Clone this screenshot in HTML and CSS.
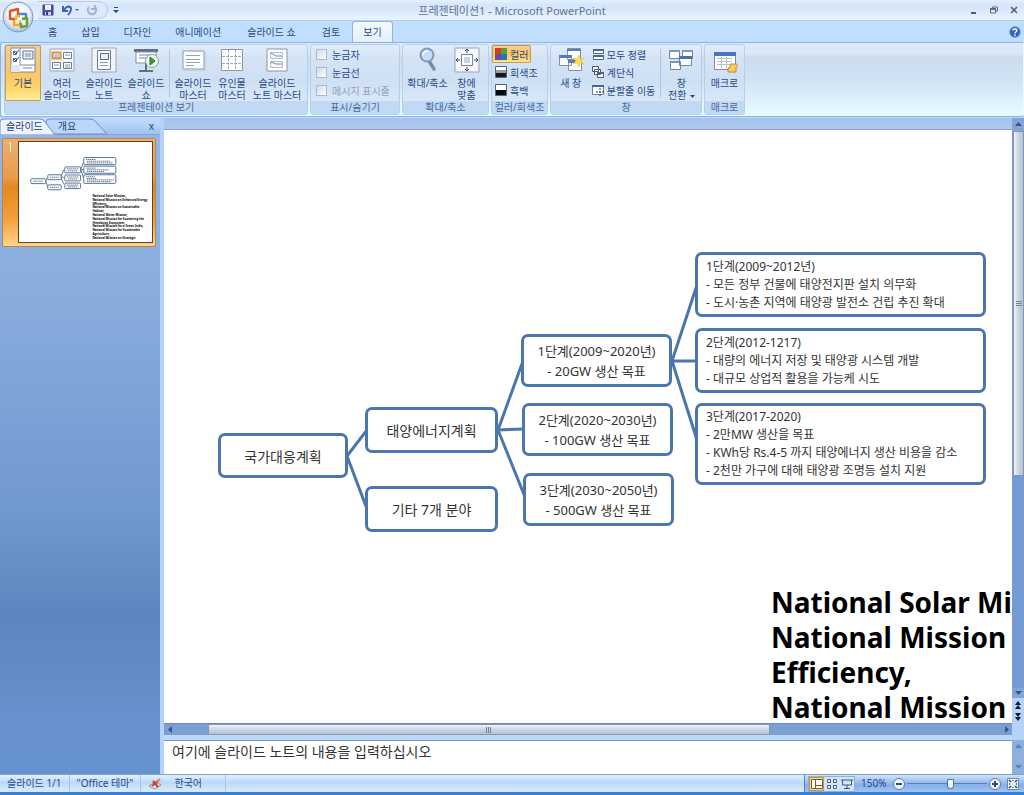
FILE: index.html
```html
<!DOCTYPE html>
<html lang="ko">
<head>
<meta charset="utf-8">
<title>프레젠테이션1 - Microsoft PowerPoint</title>
<link rel="stylesheet" href="styles.css">
</head>
<body>
<div class="app">
  <header class="titlebar">
    <button class="office" aria-label="Office 단추">
      <svg width="32" height="32" viewBox="0 0 32 32">
        <defs>
          <radialGradient id="orb" cx=".5" cy=".4" r=".6"><stop offset="0" stop-color="#fff"/><stop offset=".6" stop-color="#eef2fa"/><stop offset="1" stop-color="#a9bad8"/></radialGradient>
        </defs>
        <circle cx="16" cy="16" r="15" fill="url(#orb)" stroke="#8298bd"/>
        <g fill="none" stroke-width="2.4" stroke-linejoin="round">
          <path d="M13 18H8v-8l8-2v6" stroke="#e2561c"/>
          <path d="M17 13h7v5" stroke="#4b88d9"/>
          <path d="M12 19v5h6v-5" stroke="#f4a91d"/>
          <path d="M20 18l5-1v8l-6 1v-4" stroke="#5da53a"/>
        </g>
        <path d="M13 14h5v5h-5z" fill="#f7b548"/>
        <path d="M15.500 16.500h3v3h-3z" fill="#fff"/>
      </svg>
    </button>
    <div class="quick">
      <button aria-label="저장"><svg width="12" height="12" viewBox="0 0 12 12"><path d="M1 1h10v10H1z" fill="#4c50a4" stroke="#393c88"/><path d="M3 1h6v5H3z" fill="#eef2fc"/><path d="M3 8h6v3H3z" fill="#c7cfea"/><path d="M4 8h2v3H4z" fill="#393c88"/></svg></button>
      <button aria-label="실행 취소"><svg width="18" height="12" viewBox="0 0 18 12"><path d="M2 2v5h5M3 6c3-5 7-4 7-1 0 2-1 4-3 6" fill="none" stroke="#3c62bb" stroke-width="2"/><path d="M14 5h4l-2 2z" fill="#43649c"/></svg></button>
      <button aria-label="다시 실행"><svg width="12" height="12" viewBox="0 0 12 12"><path d="M3 3a4.200 4.200 0 1 0 6 0M9 1v4H5" fill="none" stroke="#a4b2c9" stroke-width="2"/></svg></button>
    </div>
    <button class="customize" aria-label="빠른 실행 도구 모음 사용자 지정"><svg width="6" height="6" viewBox="0 0 6 6"><path d="M1 0h4v1H1zM0 3h6L3 6z" fill="#2b4674"/></svg></button>
    <h1 class="title">프레젠테이션1 - Microsoft PowerPoint</h1>
    <div class="window-buttons">
      <button aria-label="최소화"><svg width="8" height="8" viewBox="0 0 8 8"><path d="M1 6h5v2H1z" fill="#4f5d77"/></svg></button>
      <button aria-label="이전 크기로"><svg width="8" height="8" viewBox="0 0 8 8"><path d="M2.500 2.500V1h5v4H6M.500 3h5v4h-5z" fill="none" stroke="#5c6a84"/><path d="M0 2h6v2H0z" fill="#5c6a84"/></svg></button>
      <button aria-label="닫기"><svg width="8" height="8" viewBox="0 0 8 8"><path d="M1 1l6 6M7 1L1 7" stroke="#4f5d77" stroke-width="1.600"/></svg></button>
    </div>
  </header>

  <nav class="tabs">
    <button class="pad-l">홈</button><button>삽입</button><button class="pad-l">디자인</button><button>애니메이션</button><button class="pad-xl">슬라이드 쇼</button><button>검토</button><button class="active">보기</button>
    <button class="help" aria-label="도움말"><svg width="12" height="12" viewBox="0 0 12 12"><circle cx="6" cy="6" r="5.500" fill="#2f62bd" stroke="#8fb4e8"/><path d="M4 4.500C4 2.500 8 2.500 8 4.500 8 6 6 5.500 6 7.500M6 8.500V10" fill="none" stroke="#fff" stroke-width="1.400"/></svg></button>
  </nav>

  <div class="ribbon">
    <section class="group views">
      <div class="tools">
        <button class="big on w-s"><svg width="26" height="26" viewBox="0 0 26 26"><path d="M1 1h24v24H1z" fill="#fff" stroke="#7d8a9f"/><path d="M10 1v17h15" fill="none" stroke="#7d8a9f"/><path d="M1 18h9v7H1z" fill="#dfe8f5"/><path d="M13 4h10v8H13z" fill="#edf2fa" stroke="#5a7199"/><path d="M15 7h6M15 9h6M13 21h9" stroke="#7188b1"/><path d="M3.500 4.500h3v3h-3zM3.500 11.500h3v3h-3z" fill="#fff" stroke="#5a6b88"/><path d="M4 5l2 2 3-4M4 12l2 2 3-4" fill="none" stroke="#3c4e70"/></svg><span>기본</span></button>
        <button class="big w-m"><svg width="26" height="26" viewBox="0 0 26 26"><path d="M1 2h24v22H1z" fill="#f4f6fa" stroke="#9aa6b8"/><g fill="#fff" stroke="#6d7d98"><path d="M14.500 5.500h8v6h-8zM3.500 15.500h8v6h-8zM14.500 15.500h8v6h-8z"/><path d="M3.500 5.500h8v6h-8z" stroke="#e09238" stroke-width="2"/></g><path d="M5 8h5M16 8h5M5 18h5M16 18h5M5 10h5M16 20h5" stroke="#8394b0"/></svg><span>여러<br>슬라이드</span></button>
        <button class="big w-m"><svg width="26" height="26" viewBox="0 0 26 26"><path d="M1 1h24v24H1z" fill="#f0f3f9" stroke="#9aa6b8"/><path d="M6.500 3.500h13v19h-13z" fill="#fff" stroke="#6d7d98"/><path d="M9.500 6.500h8v6h-8z" fill="#e8eef7" stroke="#526990"/><path d="M9 15.500h8M9 18.500h8" stroke="#8394b0"/></svg><span>슬라이드<br>노트</span></button>
        <button class="big w-m"><svg width="26" height="26" viewBox="0 0 26 26"><path d="M1 2h24v3H1z" fill="#5f6f87"/><path d="M3 5h20v11H3z" fill="#fff" stroke="#8090a8"/><path d="M6 8h11M6 11h9" stroke="#7188b1"/><path d="M13 16v7M6 24h14" stroke="#5f6f87" stroke-width="2"/><circle cx="19" cy="14" r="6.500" fill="#eef8e8" stroke="#8c9bac"/><path d="M17 10l5 4-5 4z" fill="#3ba234" stroke="#207a1d"/></svg><span>슬라이드<br>쇼</span></button>
        <i class="rule"></i>
        <button class="big w-m"><svg width="26" height="26" viewBox="0 0 26 26"><path d="M3 4h21v18H3z" fill="#fff" stroke="#8895ab"/><path d="M6 8.500h14M6 12.500h14M6 15.500h14M6 18.500h8" stroke="#93a3bf"/><path d="M4 23h21V6" fill="none" stroke="#b8c3d5"/></svg><span>슬라이드<br>마스터</span></button>
        <button class="big w-s"><svg width="26" height="26" viewBox="0 0 26 26"><path d="M2.500 2.500h21v21h-21z" fill="#fff" stroke="#8895ab"/><path d="M9.500 3v20M16.500 3v20M3 9.500h20M3 16.500h20" stroke="#9aa8bf" stroke-dasharray="3 1"/></svg><span>유인물<br>마스터</span></button>
        <button class="big w-l"><svg width="26" height="26" viewBox="0 0 26 26"><path d="M3 2h20v22H3z" fill="#fff" stroke="#8895ab"/><path d="M6.500 5.500h12v6h-12zM6.500 14.500h12v6h-12z" fill="#f2f5fa" stroke="#94a2ba" stroke-dasharray="2 1"/><path d="M7 6l5 3h6M7 15l5 2h6" fill="none" stroke="#7f90ae"/></svg><span>슬라이드<br>노트 마스터</span></button>
      </div>
      <h2>프레젠테이션 보기</h2>
    </section>
    <section class="group showhide">
      <div class="tools stack">
        <label><input type="checkbox">눈금자</label>
        <label><input type="checkbox">눈금선</label>
        <label class="off"><input type="checkbox" disabled>메시지 표시줄</label>
      </div>
      <h2>표시/숨기기</h2>
    </section>
    <section class="group zoom">
      <div class="tools">
        <button class="big w-m"><svg width="26" height="26" viewBox="0 0 26 26"><path d="M14 14l5 8" stroke="#7d8ca6" stroke-width="3.500" stroke-linecap="round"/><circle cx="12" cy="8" r="6.500" fill="#c5dff6" stroke="#8498b8" stroke-width="2"/><path d="M8 8c0-3 3-4 5-4" fill="none" stroke="#fff" stroke-width="1.500"/></svg><span>확대/축소</span></button>
        <button class="big w-s"><svg width="26" height="26" viewBox="0 0 26 26"><path d="M1 1h24v24H1z" fill="#f7f9fc" stroke="#97a3b6"/><path d="M7.500 7.500h11v11h-11z" fill="#fff" stroke="#7486a4"/><path d="M10 11h6M10 13h6M10 15h6" stroke="#9aa9c0"/><path d="M13 2v4M13 20v4M2 13h4M20 13h4" stroke="#414f69"/><path d="M11 4l2-2 2 2M11 22l2 2 2-2M4 11l-2 2 2 2M22 11l2 2-2 2" fill="none" stroke="#414f69"/></svg><span>창에<br>맞춤</span></button>
      </div>
      <h2>확대/축소</h2>
    </section>
    <section class="group color">
      <div class="tools stack">
        <button class="small on"><svg width="12" height="12" viewBox="0 0 12 12"><path d="M0 0h6v6H0z" fill="#dc3a20"/><path d="M6 0h6v6H6z" fill="#55a13b"/><path d="M0 6h6v6H0z" fill="#6c48a4"/><path d="M6 6h6v6H6z" fill="#2673be"/></svg>컬러</button>
        <button class="small"><svg width="12" height="12" viewBox="0 0 12 12"><path d="M.500.500h11v11H.500z" fill="#fff" stroke="#586273"/><path d="M1 4h10v4H1z" fill="#949ca8"/><path d="M1 7h10v4H1z" fill="#15181d"/></svg>회색조</button>
        <button class="small"><svg width="12" height="12" viewBox="0 0 12 12"><path d="M.500.500h11v11H.500z" fill="#fff" stroke="#586273"/><path d="M1 6h10v5H1z" fill="#08090c"/></svg>흑백</button>
      </div>
      <h2>컬러/회색조</h2>
    </section>
    <section class="group window">
      <div class="tools">
        <button class="big w-s"><svg width="26" height="26" viewBox="0 0 26 26"><g fill="#fff" stroke="#8290a8"><path d="M9.500 1.500h13v11h-13zM1.500 8.500h12v10h-12zM10.500 13.500h13v10h-13z"/></g><path d="M9 2h14v2H9zM1 8h13v3H1zM10 13h14v3H10z" fill="#5a7db7"/><path d="M21 8l1 4 4-1-3 3 3 3-4-1-1 4-2-4-4 1 3-3-3-3 4 1z" fill="#ffe14f" stroke="#e9b930" stroke-width=".500"/></svg><span>새 창</span></button>
        <div class="stack">
          <button class="small"><svg width="12" height="12" viewBox="0 0 12 12"><path d="M1.500 1.500h10v4h-10zM1.500 7.500h10v4h-10z" fill="#fff" stroke="#4b6594"/><path d="M1 1h11v2H1zM1 7h11v2H1z" fill="#4b6594"/></svg>모두 정렬</button>
          <button class="small"><svg width="12" height="12" viewBox="0 0 12 12"><g fill="#fff" stroke="#4b5c7c"><path d="M.500.500h6v5h-6zM2.500 3.500h6v5h-6zM5.500 6.500h6v5h-6z"/></g><path d="M5 6h7v2H5z" fill="#4b6594"/></svg>계단식</button>
          <button class="small"><svg width="12" height="12" viewBox="0 0 12 12"><path d="M.500 1.500h11v9H.500z" fill="#fff" stroke="#6d7d98"/><path d="M0 1h12v2H0z" fill="#4b6594"/><path d="M8 4v8M4 8h8" stroke="#2f3e5c" stroke-dasharray="2 1"/></svg>분할줄 이동</button>
        </div>
        <i class="rule"></i>
        <button class="big w-s"><svg width="26" height="26" viewBox="0 0 26 26"><g fill="#fff" stroke="#7484a0"><path d="M1.500 3.500h10v8h-10zM14.500 3.500h10v8h-10zM2.500 14.500h10v8h-10zM11.500 9.500h12v9h-12z"/></g><path d="M1 3h11v2H1zM14 3h11v2H14zM2 14h9v2H2z" fill="#8395b6"/><path d="M11 9h13v3H11z" fill="#4670b4"/></svg><span>창<br>전환<svg class="caret" width="5" height="3" viewBox="0 0 5 3"><path d="M0 0h5L2.500 3z" fill="#2b4674"/></svg></span></button>
      </div>
      <h2>창</h2>
    </section>
    <section class="group macro">
      <div class="tools">
        <button class="big w-s"><svg width="26" height="26" viewBox="0 0 26 26"><path d="M2.500 5.500h21v17h-21z" fill="#fff" stroke="#7c8ca8"/><path d="M2 5h22v4H2z" fill="#4a75bc"/><path d="M5 11.500h15M5 14.500h15M5 17.500h12M9.500 10v11M14.500 10v11" stroke="#b4bfd0"/><path d="M18 17h6c2 0 2 3 0 3v5h-8v-4h2z" fill="#fbd05b" stroke="#bd8a2b"/></svg><span>매크로</span></button>
      </div>
      <h2>매크로</h2>
    </section>
  </div>

  <div class="workspace">
    <aside class="panel">
      <div class="panel-tabs">
        <svg class="tab-shapes" width="160" height="17" viewBox="0 0 160 17">
          <path d="M46 16V4q0-3 4-3h40q4 0 6 3l11 12z" fill="#bcd6f8" stroke="#6b8fc4"/>
          <path d="M0 17V4q0-3 4-3h36q3 0 5 3l10 13z" fill="#edf4fd" stroke="#6b8fc4"/>
        </svg>
        <button class="current">슬라이드</button><button>개요</button><button class="close" aria-label="닫기">x</button>
      </div>
      <div class="thumb">
        <svg class="num" width="5" height="12" viewBox="0 0 5 12"><path d="M1 1h1.500v9" fill="none" stroke="#fff3d5"/></svg>
        <svg class="mini" viewBox="0 0 540 404">
          <g fill="#fff" stroke="#54749f" stroke-width="4">
            <path d="M108 159l10-16M108 159l10 26M168 143l14-30M168 143h14M168 143l14 26M250 112l12-30M250 112h12M250 112l12 32"/>
            <rect x="48" y="149" width="60" height="20" rx="4"/><rect x="117" y="133" width="54" height="20" rx="4"/><rect x="117" y="174" width="54" height="20" rx="4"/>
            <rect x="186" y="101" width="64" height="24" rx="4"/><rect x="186" y="134" width="64" height="24" rx="4"/><rect x="186" y="167" width="64" height="22" rx="4"/>
            <rect x="263" y="63" width="130" height="29" rx="4"/><rect x="263" y="98" width="130" height="29" rx="4"/><rect x="263" y="133" width="130" height="35" rx="4"/>
          </g>
          <path d="M58 159h40M126 143h36M126 184h36M194 109h46M198 117h40M194 142h46M198 150h40M194 175h46M198 182h40M272 71h40M276 78h96M276 85h106M272 106h40M276 113h90M276 120h70M272 141h36M276 148h40M276 154h110M276 161h98" stroke="#39465c" stroke-width="3" stroke-dasharray="6 2"/>
          <g class="mini-text">
            <text x="298" y="225">National Solar Mission,</text>
            <text x="298" y="240">National Mission on Enhanced Energy</text>
            <text x="298" y="255">Efficiency,</text>
            <text x="298" y="270">National Mission on Sustainable</text>
            <text x="298" y="285">Habitat,</text>
            <text x="298" y="301">National Water Mission,</text>
            <text x="298" y="317">National Mission for Sustaining the</text>
            <text x="298" y="332">Himalayan Ecosystem,</text>
            <text x="298" y="347">National Mission for a Green India,</text>
            <text x="298" y="362">National Mission for Sustainable</text>
            <text x="298" y="378">Agriculture,</text>
            <text x="298" y="395">National Mission on Strategic</text>
          </g>
        </svg>
      </div>
    </aside>

    <main class="editor">
      <div class="edit-top"></div>
      <div class="canvas">
        <svg class="links" width="848" height="593" viewBox="0 0 848 593"><path d="M183 326l20-26M183 326l20 53M334 300l25-69M334 300l26-1M334 300l27 67M508 231l25-76M508 231h25M508 231l25 79" fill="none" stroke="#4b76ad" stroke-width="3"/></svg>
        <div class="node root">국가대응계획</div>
        <div class="node solar">태양에너지계획</div>
        <div class="node other">기타 7개 분야</div>
        <div class="node goal g1">1단계(2009~2020년)<br>- 20GW 생산 목표</div>
        <div class="node goal g2">2단계(2020~2030년)<br>- 100GW 생산 목표</div>
        <div class="node goal g3">3단계(2030~2050년)<br>- 500GW 생산 목표</div>
        <div class="node step s1">1단계(2009~2012년)<br>- 모든 정부 건물에 태양전지판 설치 의무화<br>- 도시·농촌 지역에 태양광 발전소 건립 추진 확대</div>
        <div class="node step s2">2단계(2012-1217)<br>- 대량의 에너지 저장 및 태양광 시스템 개발<br>- 대규모 상업적 활용을 가능케 시도</div>
        <div class="node step s3">3단계(2017-2020)<br>- 2만MW 생산을 목표<br>- KWh당 Rs.4-5 까지 태양에너지 생산 비용을 감소<br>- 2천만 가구에 대해 태양광 조명등 설치 지원</div>
        <div class="missions">National Solar Mission,<br>National Mission on Enhanced Energy<br>Efficiency,<br>National Mission on Sustainable</div>
      </div>
      <div class="hscroll">
        <button aria-label="왼쪽으로"><svg width="5" height="7" viewBox="0 0 5 7"><path d="M4 0v7L0 3.500z" fill="#31568f"/></svg></button>
        <div class="htrack"><div class="hthumb"><svg width="6" height="6" viewBox="0 0 6 6"><path d="M.500 0v6M2.500 0v6M4.500 0v6" stroke="#71819d"/></svg></div></div>
        <button aria-label="오른쪽으로"><svg width="5" height="7" viewBox="0 0 5 7"><path d="M1 0v7l4-3.500z" fill="#31568f"/></svg></button>
      </div>
      <textarea class="notes" aria-label="슬라이드 노트">여기에 슬라이드 노트의 내용을 입력하십시오</textarea>
    </main>

    <div class="vscroll">
      <button class="up" aria-label="위로"><svg width="7" height="5" viewBox="0 0 7 5"><path d="M0 4h7L3.500 0z" fill="#31568f"/></svg></button>
      <div class="vtrack"><div class="vthumb"><svg width="6" height="6" viewBox="0 0 6 6"><path d="M0 .500h6M0 2.500h6M0 4.500h6" stroke="#71819d"/></svg></div></div>
      <button class="down" aria-label="아래로"><svg width="7" height="5" viewBox="0 0 7 5"><path d="M0 0h7L3.500 4z" fill="#31568f"/></svg></button>
      <div class="jump">
        <button aria-label="이전 슬라이드"><svg width="6" height="9" viewBox="0 0 6 9"><path d="M0 4h6L3 0zM0 8h6L3 4z" fill="#111b2e"/></svg></button>
        <button aria-label="다음 슬라이드"><svg width="6" height="9" viewBox="0 0 6 9"><path d="M0 0h6L3 4zM0 4h6L3 8z" fill="#111b2e"/></svg></button>
      </div>
      <div class="notes-scroll">
        <svg width="7" height="5" viewBox="0 0 7 5"><path d="M0 4h7L3.500 0z" fill="#5c7fb5"/></svg>
        <svg width="7" height="5" viewBox="0 0 7 5"><path d="M0 0h7L3.500 4z" fill="#5c7fb5"/></svg>
      </div>
    </div>
  </div>

  <footer class="status">
    <span class="cell slide-no">슬라이드 1/1</span>
    <span class="cell theme">"Office 테마"</span>
    <span class="cell lang"><svg width="14" height="12" viewBox="0 0 14 12"><path d="M1 8l6-4 6 3-6 4z" fill="#f4f7fb" stroke="#7f8da5"/><path d="M5 3l5 6M11 2l-7 6" stroke="#d8392a" stroke-width="2"/><path d="M9 4l3-3" stroke="#e58f3b" stroke-width="2"/></svg>한국어</span>
    <div class="zoombar">
      <div class="view-buttons">
        <button class="on" aria-label="기본"><svg width="12" height="10" viewBox="0 0 12 10"><path d="M.500.500h11v9H.500zM4.500 1v8M5 6.500h6" fill="#fff" stroke="#7d5a22"/></svg></button>
        <button aria-label="여러 슬라이드"><svg width="12" height="10" viewBox="0 0 12 10"><path d="M1.500.500h3v3h-3zM7.500.500h3v3h-3zM1.500 6.500h3v3h-3zM7.500 6.500h3v3h-3z" fill="#fff" stroke="#4d648f"/></svg></button>
        <button aria-label="슬라이드 쇼"><svg width="12" height="10" viewBox="0 0 12 10"><path d="M0 1h12M1.500 1v5h9V1M6 6v3M3 9.500h6" fill="none" stroke="#3f5682"/></svg></button>
      </div>
      <span class="percent">150%</span>
      <button class="round" aria-label="축소"><svg width="12" height="12" viewBox="0 0 12 12"><circle cx="6" cy="6" r="5.500" fill="#eef5fe" stroke="#60789f"/><path d="M3 6h6" stroke="#334b75" stroke-width="2"/></svg></button>
      <input type="range" min="0" max="100" value="55" aria-label="확대/축소 비율">
      <button class="round" aria-label="확대"><svg width="12" height="12" viewBox="0 0 12 12"><circle cx="6" cy="6" r="5.500" fill="#eef5fe" stroke="#60789f"/><path d="M3 6h6M6 3v6" stroke="#334b75" stroke-width="2"/></svg></button>
      <button class="fit" aria-label="창에 맞춤"><svg width="12" height="12" viewBox="0 0 12 12"><path d="M.500.500h11v11H.500z" fill="#edf4fc" stroke="#6f86ad"/><path d="M2 2l2 2M10 2L8 4M2 10l2-2M10 10L8 8M6 2v1M6 9v1M2 6h1M9 6h1" stroke="#2f466f" stroke-width="1.500"/></svg></button>
    </div>
  </footer>
</div>
</body>
</html>
```
FILE: styles.css
```css
* { box-sizing: border-box; }
body {
  margin: 0;
  font-family: "Noto Sans", "Noto Sans CJK KR", sans-serif;
  font-size: 11px;
  color: #2a4a86;
}
button {
  margin: 0;
  padding: 0;
  border: 0;
  background: none;
  color: inherit;
  font: inherit;
}
svg { display: block; flex: none; }
h1, h2 { margin: 0; font-weight: normal; }

.app {
  display: flex;
  flex-direction: column;
  height: 100vh;
  overflow: hidden;
  background: #bbd9fa;
  border-bottom: 3px solid #3482dc;
}

/* Title bar */
.titlebar {
  position: relative;
  display: flex;
  align-items: center;
  height: 21px;
  flex: none;
  padding-left: 38px;
  background: linear-gradient(#e4f1fd, #d4e6fb 25%, #dcebfd 60%, #e9f6ff);
  border-bottom: 1px solid #b3d0f0;
}
.office { position: absolute; left: 2px; top: 1px; z-index: 2; }
.quick {
  display: flex;
  align-items: center;
  gap: 7px;
  height: 18px;
  padding: 0 9px 0 4px;
  border: 1px solid #b0cbeb;
  border-left: 0;
  border-radius: 0 9px 9px 0;
  background: #dbe9fa;
}
.customize { margin-left: 5px; }
.title {
  position: absolute;
  left: 0;
  right: 0;
  top: 0;
  text-align: center;
  pointer-events: none;
  font-size: 11px;
  line-height: 21px;
  color: #5e7294;
  white-space: nowrap;
}
.window-buttons { display: flex; gap: 12px; margin-left: auto; padding-right: 6px; }

/* Tabs */
.tabs {
  display: flex;
  align-items: stretch;
  height: 21px;
  flex: none;
  padding-left: 34px;
  background: #c0dfff;
  font-size: 10px;
  line-height: 20px;
}
.tabs button { padding: 0 10px; white-space: nowrap; }
.tabs .pad-l { padding: 0 14px; }
.tabs .pad-xl { padding: 0 16px; }
.tabs .active {
  margin-left: 2px;
  border: 1px solid #8fb4e2;
  border-bottom: 0;
  border-radius: 3px 3px 0 0;
  background: linear-gradient(#f4faff, #e2effd);
}
.tabs .help { margin-left: auto; padding: 0 3px; }

/* Ribbon */
.ribbon {
  display: flex;
  gap: 2px;
  flex: none;
  height: 75px;
  padding: 1px 3px;
  border: 1px solid #8db2e3;
  border-right-color: #f0f8ff;
  border-radius: 3px;
  background: linear-gradient(#ddeafa, #d9e7f6 15%, #ccdcef 20%, #d2e2f5 50%, #e0f4fd 85%, #e5fdff);
}
.group {
  display: flex;
  flex-direction: column;
  flex: none;
  border: 1px solid #b5cfe9;
  border-radius: 3px;
  background: linear-gradient(#e0ecfa, #d4e3f5 20%, #d0e0f4 50%, #dcecfc);
}
.group h2 {
  height: 13px;
  background: #c1d9f3;
  border-radius: 0 0 2px 2px;
  font-size: 10px;
  line-height: 13px;
  text-align: center;
  color: #44699f;
  white-space: nowrap;
}
.tools { display: flex; flex: 1; justify-content: center; }
.stack { display: flex; flex-direction: column; justify-content: flex-start; }
.views { width: 304px; }
.views .tools { justify-content: flex-start; }
.showhide { width: 90px; }
.zoom { width: 87px; }
.color { width: 57px; }
.window { width: 152px; }
.macro { width: 41px; }
.big {
  display: flex;
  flex-direction: column;
  align-items: center;
  gap: 4px;
  padding-top: 2px;
  border-radius: 2px;
  font-size: 10px;
  line-height: 12px;
  white-space: nowrap;
}
.big.on, .small.on {
  background: linear-gradient(#f3cf98, #fcc566 50%, #ffd76b 80%, #fff0a4);
  box-shadow: inset 0 0 0 1px #c29a5e;
}
.w-s { width: 36px; }
.w-m { width: 42px; }
.w-l { width: 54px; }
.rule { width: 1px; margin: 4px 2px; background: #aac5e5; }
.caret { display: inline-block; margin-left: 3px; vertical-align: middle; }
.showhide label {
  display: flex;
  align-items: center;
  gap: 5px;
  height: 18px;
  padding-left: 5px;
  font-size: 10px;
  white-space: nowrap;
}
.showhide input {
  appearance: none;
  width: 11px;
  height: 11px;
  margin: 0;
  border: 1px solid #a9bbd2;
  background: linear-gradient(135deg, #d3dbe5, #fff);
}
.off { color: #94a2b5; }
.small {
  display: flex;
  align-items: center;
  gap: 3px;
  height: 18px;
  padding: 0 3px;
  border-radius: 2px;
  font-size: 10px;
  white-space: nowrap;
}
.color .small { align-self: flex-start; }

/* Workspace */
.workspace {
  display: grid;
  grid-template-columns: 160px 1fr 12px;
  flex: 1;
  min-height: 0;
  padding-top: 1px;
}
.panel { background: linear-gradient(#96b7e6, #8eb0df 20%, #7099d0 60%, #5c86bf 76%, #6792cf 92%, #6792d0); }
.panel-tabs {
  position: relative;
  display: flex;
  align-items: center;
  height: 17px;
  padding: 0 6px;
  background: linear-gradient(#c6ddfa, #a0c2f0);
  border-bottom: 1px solid #82a6d9;
}
.panel-tabs button { position: relative; font-size: 10px; line-height: 16px; color: #1d3f80; }
.panel-tabs button + button { margin-left: 15px; }
.panel-tabs .close:last-child { margin-left: auto; }
.tab-shapes { position: absolute; left: 0; top: 0; }
.thumb {
  display: flex;
  gap: 6px;
  margin: 3px 4px 0 2px;
  padding: 3px 3px 4px 5px;
  border: 1px solid #b9834c;
  border-radius: 2px;
  background: linear-gradient(#ecb072, #e99c4c 35%, #e58722 45%, #f3a13b 75%, #ffd389);
}
.mini { flex: 1; min-width: 0; background: #fff; outline: 1px solid #5c4430; }
.mini-text { font: bold 12px "Noto Sans", sans-serif; fill: #000; }

.editor {
  display: flex;
  flex-direction: column;
  min-width: 0;
  min-height: 0;
  border-left: 4px solid #b5d3f8;
}
.edit-top { height: 12px; flex: none; background: linear-gradient(#a5c3ec, #acc8ee); border-bottom: 1px solid #86a7d6; }
.canvas {
  position: relative;
  flex: 1;
  min-height: 0;
  overflow: hidden;
  background: #fff;
  color: #333;
}
.links { position: absolute; left: 0; top: 0; }
.node {
  position: absolute;
  display: flex;
  align-items: center;
  justify-content: center;
  border: 3px solid #4b76ad;
  border-radius: 7px;
  background: #fff;
  font-size: 14px;
  white-space: nowrap;
}
.root { left: 54px; top: 303px; width: 130px; height: 45px; }
.solar { left: 201px; top: 277px; width: 133px; height: 46px; }
.other { left: 201px; top: 356px; width: 133px; height: 46px; }
.goal { width: 151px; height: 53px; font-size: 13px; line-height: 20px; text-align: center; }
.g1 { left: 357px; top: 204px; }
.g2 { left: 358px; top: 273px; }
.g3 { left: 359px; top: 343px; }
.step { left: 531px; width: 291px; height: 65px; padding-left: 8px; justify-content: flex-start; font-size: 12px; line-height: 18px; }
.s1 { top: 122px; }
.s2 { top: 198px; }
.s3 { top: 273px; height: 82px; }
.missions {
  position: absolute;
  left: 607px;
  top: 455px;
  font: bold 28px/35px "Noto Sans", sans-serif;
  color: #000;
  white-space: nowrap;
}

.hscroll {
  display: flex;
  align-items: stretch;
  height: 12px;
  flex: none;
  background: #7c9fd3;
  border-top: 1px solid #6a8abb;
}
.hscroll button { display: grid; place-items: center; width: 12px; }
.htrack { flex: 1; padding-left: 32px; }
.hthumb {
  display: grid;
  place-items: center;
  width: 71%;
  height: 100%;
  border: 1px solid #8496b1;
  background: linear-gradient(#f1f4f9, #cbd4e2 50%, #b6c2d6);
}
.notes {
  display: block;
  flex: none;
  height: 34px;
  margin: 5px 0 0;
  padding: 1px 8px;
  border: 0;
  border-top: 1px solid #7d97bd;
  border-radius: 0;
  background: #fff;
  color: #333;
  font: 14px/20px "Noto Sans", "Noto Sans CJK KR", sans-serif;
  resize: none;
  overflow: hidden;
}

.vscroll { display: flex; flex-direction: column; min-height: 0; background: #b5d3f8; }
.vscroll button { display: grid; place-items: center; flex: none; }
.vscroll .up { height: 13px; background: #83a4d4; }
.vscroll .down { height: 10px; background: #83a4d4; }
.vtrack { flex: 1; min-height: 0; padding-left: 1px; background: #759bd2; }
.vthumb {
  display: grid;
  place-items: center;
  height: 62%;
  border: 1px solid #8496b1;
  background: linear-gradient(90deg, #f1f4f9, #cbd4e2 50%, #b6c2d6);
}
.jump { display: flex; flex-direction: column; justify-content: center; gap: 3px; height: 26px; flex: none; }
.notes-scroll {
  display: flex;
  flex-direction: column;
  align-items: center;
  justify-content: space-between;
  height: 34px;
  flex: none;
  margin-top: 16px;
  padding: 4px 0;
  background: #8fb0dd;
}

/* Status bar */
.status {
  display: flex;
  align-items: stretch;
  height: 18px;
  flex: none;
  border-top: 1px solid #7fa2cf;
  background: linear-gradient(#e2f1fe, #b9d8fa 45%, #cde3fb 70%, #e0e8fa);
  font-size: 10px;
  line-height: 17px;
}
.cell { display: flex; align-items: center; padding: 0 7px; border-right: 1px solid #a6c5ea; white-space: nowrap; }
.lang { gap: 12px; width: 85px; }
.zoombar {
  display: flex;
  align-items: center;
  gap: 6px;
  margin-left: auto;
  padding: 0 5px 0 3px;
  border-left: 1px solid #5d83bb;
  background: linear-gradient(#d0e2f9, #84b0ea 60%, #a1c4f2);
}
.view-buttons { display: flex; height: 16px; border: 1px solid #8eaedb; background: #d3e4f9; }
.view-buttons button { display: grid; place-items: center; width: 15px; }
.view-buttons .on { background: #ffd681; box-shadow: inset 0 0 0 1px #c2975a; }
.percent { width: 26px; }
.zoombar input {
  appearance: none;
  width: 80px;
  height: 12px;
  margin: 0 -4px;
  background: linear-gradient(#5d7eaf, #5d7eaf) center / 100% 1px no-repeat;
}
.zoombar input::-webkit-slider-thumb {
  appearance: none;
  width: 7px;
  height: 10px;
  border: 1px solid #56719d;
  border-radius: 1px 1px 4px 4px;
  background: #eef5fe;
}
```
